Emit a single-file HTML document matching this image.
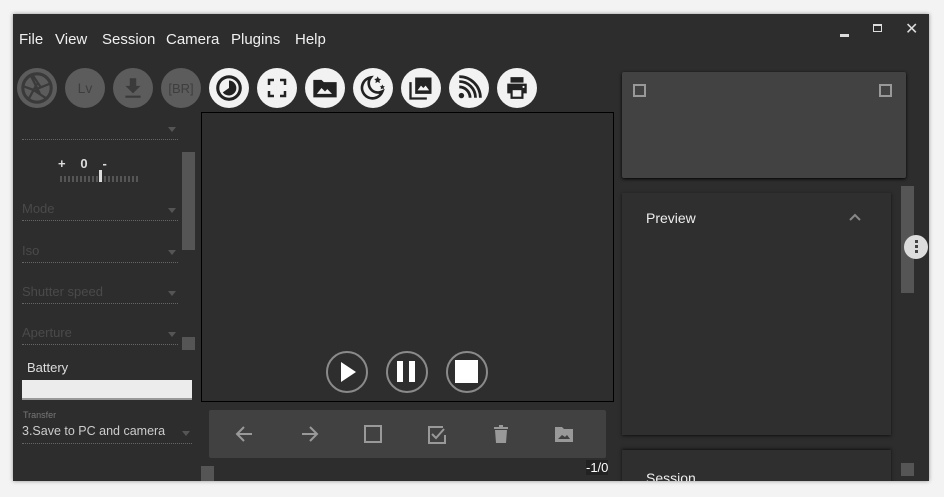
<!DOCTYPE html>
<html><head><style>
*{margin:0;padding:0;box-sizing:border-box}
body{width:944px;height:497px;background:#f3f3f3;font-family:"Liberation Sans",sans-serif;position:relative;overflow:hidden}
.win{position:absolute;left:13px;top:14px;width:916px;height:467px;background:#2d2d2d;box-shadow:0 0 4px rgba(0,0,0,.4);overflow:hidden}
.a{position:absolute}
.menu{top:17px;font-size:15px;color:#f0f0f0}
.cb{position:absolute;top:54px;width:40px;height:40px;border-radius:50%;display:flex;align-items:center;justify-content:center}
.dis{background:#5c5c5c;color:#3a3a3a}
.en{background:#f2f2f2}
.dd{position:absolute;left:9px;width:156px;border-bottom:1px dotted #666;font-size:13px;color:#4a4a4a;height:20px}
.dd:after{content:"";position:absolute;right:2px;top:7px;border:4px solid transparent;border-top:5px solid #555}
.pc{position:absolute;width:42px;height:42px;border:2px solid #8a8a8a;border-radius:50%;top:337px}
</style></head><body>
<div class="win">
<div class="a menu" style="left:6px">File</div>
<div class="a menu" style="left:42px">View</div>
<div class="a menu" style="left:89px">Session</div>
<div class="a menu" style="left:153px">Camera</div>
<div class="a menu" style="left:218px">Plugins</div>
<div class="a menu" style="left:282px">Help</div>
<div class="a" style="left:827px;top:20px;width:9px;height:3px;background:#ddd"></div>
<div class="a" style="left:860px;top:10px;width:9px;height:8px;border:1px solid #ddd;border-top-width:2px"></div>
<div class="a" style="left:892px;top:5px;color:#ddd;font-size:16px">✕</div>

<div class="cb dis" style="left:4px"><svg width="34" height="34" viewBox="0 0 24 24"><circle cx="12" cy="12" r="10" fill="none" stroke="#3a3a3a" stroke-width="2.2"/><path d="M9 3 L15 12 M21 9 L11 13 M18 19 L9 13 M6 20 L12 9 M3 11 L14 15 M8 4 L14 16" stroke="#3a3a3a" stroke-width="1.6"/></svg></div>
<div class="cb dis" style="left:52px;font-size:14px;color:#3e3e3e">Lv</div>
<div class="cb dis" style="left:100px"><svg width="26" height="26" viewBox="0 0 24 24"><path d="M9 3h6v7h4l-7 7-7-7h4z M5 19h14v2H5z" fill="#3a3a3a"/></svg></div>
<div class="cb dis" style="left:148px;font-size:13px;color:#3e3e3e">[BR]</div>
<div class="cb en" style="left:196px"><svg width="30" height="30" viewBox="0 0 24 24"><circle cx="12" cy="12" r="9" fill="none" stroke="#222" stroke-width="2.5"/><path d="M12 6a6 6 0 1 1-5 9.5L12 12z" fill="#222"/></svg></div>
<div class="cb en" style="left:244px"><svg width="24" height="24" viewBox="0 0 24 24"><path d="M4 9V4h5M15 4h5v5M20 15v5h-5M9 20H4v-5" fill="none" stroke="#222" stroke-width="2.5"/></svg></div>
<div class="cb en" style="left:292px"><svg width="28" height="28" viewBox="0 0 24 24"><path d="M2 5h7l2 2h11v13H2z" fill="#222"/><path d="M5 17l4-5 3 3 2-2 4 4z" fill="#f2f2f2"/></svg></div>
<div class="cb en" style="left:340px"><svg width="28" height="28" viewBox="0 0 24 24"><path d="M10 3a9 9 0 1 0 10 12A8 8 0 0 1 10 3z" fill="none" stroke="#222" stroke-width="2.3"/><path d="M16 2l1 2 2 .3-1.5 1.4.4 2.1-1.9-1-1.9 1 .4-2.1L13 4.3l2-.3z M20 9l.7 1.4 1.5.2-1.1 1 .3 1.5-1.4-.7-1.4.7.3-1.5-1.1-1 1.5-.2z" fill="#222"/></svg></div>
<div class="cb en" style="left:388px"><svg width="28" height="28" viewBox="0 0 24 24"><path d="M7 3h14v14H7z" fill="#222"/><path d="M9 14l3-4 2 2 2-2 3 4z" fill="#f2f2f2"/><path d="M3 7v14h14" fill="none" stroke="#222" stroke-width="2"/></svg></div>
<div class="cb en" style="left:436px"><svg width="26" height="26" viewBox="0 0 24 24"><circle cx="5" cy="19" r="2.5" fill="#222"/><path d="M3 11a10 10 0 0 1 10 10M3 6a15 15 0 0 1 15 15M3 1.5a19.5 19.5 0 0 1 19.5 19.5" fill="none" stroke="#222" stroke-width="2.6"/></svg></div>
<div class="cb en" style="left:484px"><svg width="26" height="26" viewBox="0 0 24 24"><path d="M6 2h12v5H6z M3 8h18v9h-3v5H6v-5H3z" fill="#222"/><path d="M8 14h8v6H8z" fill="#f2f2f2"/><circle cx="18" cy="11" r="1" fill="#f2f2f2"/></svg></div>

<div class="dd" style="top:106px"></div>
<div class="a" style="left:45px;top:142px;font-size:13px;color:#ddd;font-weight:bold;letter-spacing:1px">+&nbsp;&nbsp;&nbsp;0&nbsp;&nbsp;&nbsp;-</div>
<div class="a" style="left:47px;top:162px;width:80px;height:6px;background:repeating-linear-gradient(90deg,#555 0 2px,transparent 2px 4px)"></div>
<div class="a" style="left:86px;top:156px;width:3px;height:12px;background:#ddd"></div>
<div class="a" style="left:169px;top:138px;width:13px;height:98px;background:#555"></div>
<div class="dd" style="top:187px">Mode</div>
<div class="dd" style="top:229px">Iso</div>
<div class="dd" style="top:270px">Shutter speed</div>
<div class="dd" style="top:311px">Aperture</div>
<div class="a" style="left:169px;top:323px;width:13px;height:13px;background:#555"></div>
<div class="a" style="left:14px;top:346px;font-size:13px;color:#ddd">Battery</div>
<div class="a" style="left:9px;top:366px;width:170px;height:20px;background:#ececec;border-bottom:2px solid #999"></div>
<div class="a" style="left:10px;top:396px;font-size:9px;color:#777">Transfer</div>
<div class="dd" style="top:410px;width:170px;color:#ccc;font-size:12.5px">3.Save to PC and camera</div>
<div class="a" style="left:188px;top:452px;width:13px;height:15px;background:#555"></div>

<div class="a" style="left:188px;top:98px;width:413px;height:290px;border:1px solid #000;background:#2e2e2e"></div>
<div class="pc" style="left:313px"><svg width="38" height="38" viewBox="0 0 38 38"><path d="M13 9l15 10-15 10z" fill="#fff"/></svg></div>
<div class="pc" style="left:373px"><svg width="38" height="38" viewBox="0 0 38 38"><path d="M9 8h6v21H9zM21 8h6v21h-6z" fill="#fff"/></svg></div>
<div class="pc" style="left:433px"><svg width="38" height="38" viewBox="0 0 38 38"><path d="M7 7h23v23H7z" fill="#fff"/></svg></div>

<div class="a" style="left:196px;top:396px;width:397px;height:48px;background:#414141;border-radius:2px"></div>
<svg class="a" style="left:196px;top:396px" width="397" height="48" viewBox="0 0 397 48" fill="none" stroke="#999" stroke-width="2">
<path d="M43 24H29M35 17l-7 7 7 7"/><path d="M93 24h14M101 17l7 7-7 7"/>
<rect x="156" y="16" width="16" height="16"/><path d="M234 17h-14v16h16v-8M223 24l4 4 8-9"/>
<path d="M285 18h14M290 16h4" /><path d="M286 20h12l-1 13h-10z" fill="#999" stroke="none"/>
<path d="M346 17h7l2 2h9v13h-18z" fill="#999" stroke="none"/><path d="M349 29l4-4 3 2 2-2 3 4z" fill="#414141" stroke="none"/>
</svg>
<div class="a" style="left:573px;top:446px;font-size:13px;color:#fff;background:#222">-1/0</div>

<div class="a" style="left:609px;top:58px;width:284px;height:106px;background:#424242;border-radius:2px;box-shadow:0 1px 3px #000"></div>
<div class="a" style="left:620px;top:70px;width:13px;height:13px;border:2px solid #999"></div>
<div class="a" style="left:866px;top:70px;width:13px;height:13px;border:2px solid #999"></div>
<div class="a" style="left:609px;top:179px;width:269px;height:242px;background:#2f2f2f;box-shadow:0 1px 3px #111"></div>
<div class="a" style="left:633px;top:196px;font-size:14px;color:#eee">Preview</div>
<svg class="a" style="left:835px;top:198px" width="14" height="10"><path d="M2 8l5-5 5 5" fill="none" stroke="#888" stroke-width="2"/></svg>
<div class="a" style="left:609px;top:436px;width:269px;height:40px;background:#2f2f2f;box-shadow:0 -1px 3px #111"></div>
<div class="a" style="left:633px;top:456px;font-size:14px;color:#eee">Session</div>
<div class="a" style="left:888px;top:172px;width:13px;height:107px;background:#555"></div>
<div class="a" style="left:891px;top:221px;width:24px;height:24px;border-radius:50%;background:#ddd"></div>
<div class="a" style="left:902px;top:226px;width:3px;height:14px;background:repeating-linear-gradient(#444 0 3px,transparent 3px 5px)"></div>
<div class="a" style="left:888px;top:449px;width:13px;height:13px;background:#555"></div>
</div>
</body></html>
